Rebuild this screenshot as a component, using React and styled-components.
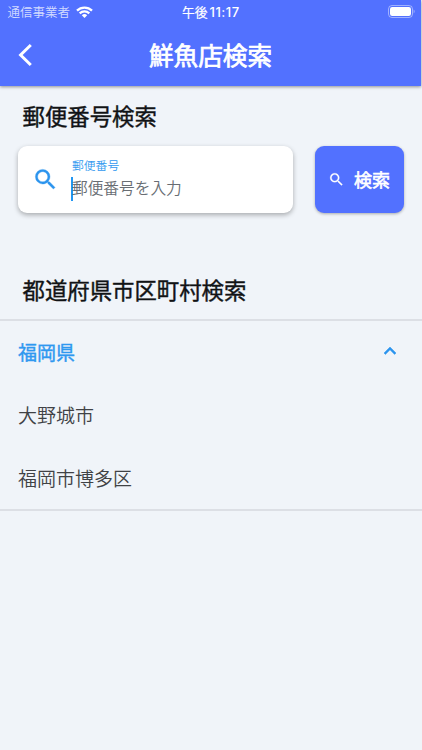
import React from "react";
import styled, { createGlobalStyle } from "styled-components";

const Global = createGlobalStyle`
  * { box-sizing: border-box; }
  body { margin: 0; background: #f0f4f9; font-family: "Noto Sans CJK JP", sans-serif; }
`;

const Screen = styled.main`
  height: 750px;
  overflow: hidden;
  background: #f0f4f9;
  display: flex;
  flex-direction: column;
`;

const Header = styled.header`
  height: 85.6px;
  flex: none;
  margin-right: 1px;
  background: #5271ff;
  color: #fff;
  box-shadow: 0 1px 3px rgba(0, 0, 0, 0.4);
`;

const StatusBar = styled.div`
  height: 24px;
  display: grid;
  grid-template-columns: 1fr auto 1fr;
  align-items: center;
  padding: 0 6px 0 7.5px;
`;

const Carrier = styled.div`
  display: flex;
  align-items: center;
  gap: 5.5px;
  font-size: 12.5px;
  font-weight: 350;
  line-height: 24px;
  color: #d3dbff;
`;

const Clock = styled.div`
  display: flex;
  align-items: center;
  gap: 2px;
  margin: -1px 1px 0 0;
  font-size: 12.8px;
  font-weight: 400;
  line-height: 24px;
  -webkit-text-stroke: 0.2px #fff;
`;

const Digits = styled.span`
  font-family: Inter, sans-serif;
  font-size: 13px;
  font-weight: 500;
  letter-spacing: 0.5px;
  -webkit-text-stroke: 0;
`;

const Battery = styled.svg`
  justify-self: end;
  margin-top: -2px;
`;

const TitleBar = styled.div`
  height: 61px;
  display: grid;
  grid-template-columns: 60px 1fr 60px;
  align-items: center;
`;

const BackButton = styled.button`
  border: 0;
  background: none;
  padding: 0 0 0 17px;
  display: flex;
`;

const Title = styled.h1`
  margin: -2px 0 0;
  text-align: center;
  font-size: 24.6px;
  font-weight: 400;
  line-height: 36px;
  -webkit-text-stroke: 0.75px #fff;
`;

const Heading = styled.h2`
  margin: ${(p) => p.$top}px 0 0 22.5px;
  font-size: 22.4px;
  font-weight: 400;
  line-height: 32px;
  color: #111315;
  -webkit-text-stroke: 0.4px #111315;
`;

const SearchRow = styled.section`
  display: flex;
  gap: 22px;
  margin: 15.4px 18px 0;
  height: 67px;
`;

const Field = styled.label`
  width: 274.5px;
  border-radius: 9px;
  background: #fff;
  display: flex;
  align-items: center;
  padding-left: 13.5px;
  gap: 12.5px;
  box-shadow: 0 2px 5px rgba(0, 0, 0, 0.3);
`;

const FieldText = styled.div`
  display: flex;
  flex-direction: column;
  margin-top: -3px;
`;

const FieldLabel = styled.span`
  font-size: 11.8px;
  font-weight: 350;
  line-height: 17px;
  padding-left: 1px;
  color: #3299ef;
`;

const Placeholder = styled.span`
  height: 24px;
  margin-top: 4px;
  border-left: 2px solid #2196f3;
  font-size: 15.7px;
  font-weight: 350;
  line-height: 21px;
  text-indent: -1px;
  color: #686d73;
`;

const SearchButton = styled.button`
  width: 89px;
  border: 0;
  border-radius: 9px;
  background: #5271ff;
  color: #fff;
  padding: 0 0 1px;
  display: flex;
  align-items: center;
  justify-content: center;
  gap: 9px;
  font-family: inherit;
  font-size: 18px;
  font-weight: 400;
  -webkit-text-stroke: 0.6px #fff;
  box-shadow: 0 1px 3px rgba(0, 0, 0, 0.3);
`;

const List = styled.section`
  margin-top: 14px;
  border-top: 2px solid #dcdfe5;
  border-bottom: 2px solid #dcdfe5;
  height: 192px;
`;

const Row = styled.div`
  height: 63px;
  display: flex;
  align-items: center;
  justify-content: space-between;
  padding: 0 20px 2px 18px;
  font-size: 19px;
  font-weight: ${(p) => (p.$active ? 400 : 350)};
  color: ${(p) => (p.$active ? "#2f98f0" : "#404245")};
  -webkit-text-stroke: ${(p) => (p.$active ? "0.4px #2f98f0" : "0")};
`;

const Glyph = styled.svg`
  flex: none;
`;

const SearchIcon = ({ size, color }) => (
  <Glyph width={size} height={size} viewBox="0 0 24 24" fill={color} stroke={color} strokeWidth="0.3">
    <path d="M15.5 14h-.79l-.28-.27A6.47 6.47 0 0 0 16 9.5 6.5 6.5 0 1 0 9.5 16c1.61 0 3.09-.59 4.23-1.57l.27.28v.79l5 4.99L20.49 19l-4.99-5zm-6 0C7.01 14 5 11.99 5 9.5S7.01 5 9.5 5 14 7.01 14 9.5 11.99 14 9.5 14z" />
  </Glyph>
);

const cities = ["大野城市", "福岡市博多区"];

export default function App() {
  return (
    <Screen>
      <Global />
      <Header>
        <StatusBar>
          <Carrier>
            通信事業者
            <svg width="17" height="12" viewBox="0 0 17 12" fill="none" stroke="#fff" strokeWidth="2.3">
              <path d="M1 4.6a10.7 10.7 0 0 1 15 0M3.7 7.3a6.9 6.9 0 0 1 9.6 0" />
              <path d="M8.5 12 5.8 9.3a3.9 3.9 0 0 1 5.4 0z" fill="#fff" stroke="none" />
            </svg>
          </Carrier>
          <Clock>
            午後<Digits>11:17</Digits>
          </Clock>
          <Battery width="27" height="13" viewBox="0 0 27 13">
            <rect x="0.5" y="0.5" width="24" height="12" rx="3.5" fill="none" stroke="#fff" strokeOpacity="0.45" />
            <rect x="2" y="2" width="21" height="9" rx="2.2" fill="#fff" />
            <path d="M25.7 4.6c1.2.7 1.2 3.1 0 3.8z" fill="#fff" fillOpacity="0.5" />
          </Battery>
        </StatusBar>
        <TitleBar>
          <BackButton aria-label="戻る">
            <svg width="16" height="24" viewBox="0 0 16 24" fill="none" stroke="#fff" strokeWidth="3">
              <path d="M13.8 2 3.6 12l10.2 10" />
            </svg>
          </BackButton>
          <Title>鮮魚店検索</Title>
        </TitleBar>
      </Header>

      <Heading $top={13.4}>郵便番号検索</Heading>
      <SearchRow>
        <Field>
          <SearchIcon size={27} color="#2b94ee" />
          <FieldText>
            <FieldLabel>郵便番号</FieldLabel>
            <Placeholder>郵便番号を入力</Placeholder>
          </FieldText>
        </Field>
        <SearchButton>
          <SearchIcon size={17} color="#fff" />
          検索
        </SearchButton>
      </SearchRow>

      <Heading $top={59.6}>都道府県市区町村検索</Heading>
      <List>
        <Row $active>
          福岡県
          <Glyph width="24" height="24" viewBox="0 0 24 24" fill="#2b94ee" stroke="#2b94ee" strokeWidth="0.5">
            <path d="m12 8-6 6 1.41 1.41L12 10.83l4.59 4.58L18 14z" />
          </Glyph>
        </Row>
        {cities.map((city) => (
          <Row key={city}>{city}</Row>
        ))}
      </List>
    </Screen>
  );
}
